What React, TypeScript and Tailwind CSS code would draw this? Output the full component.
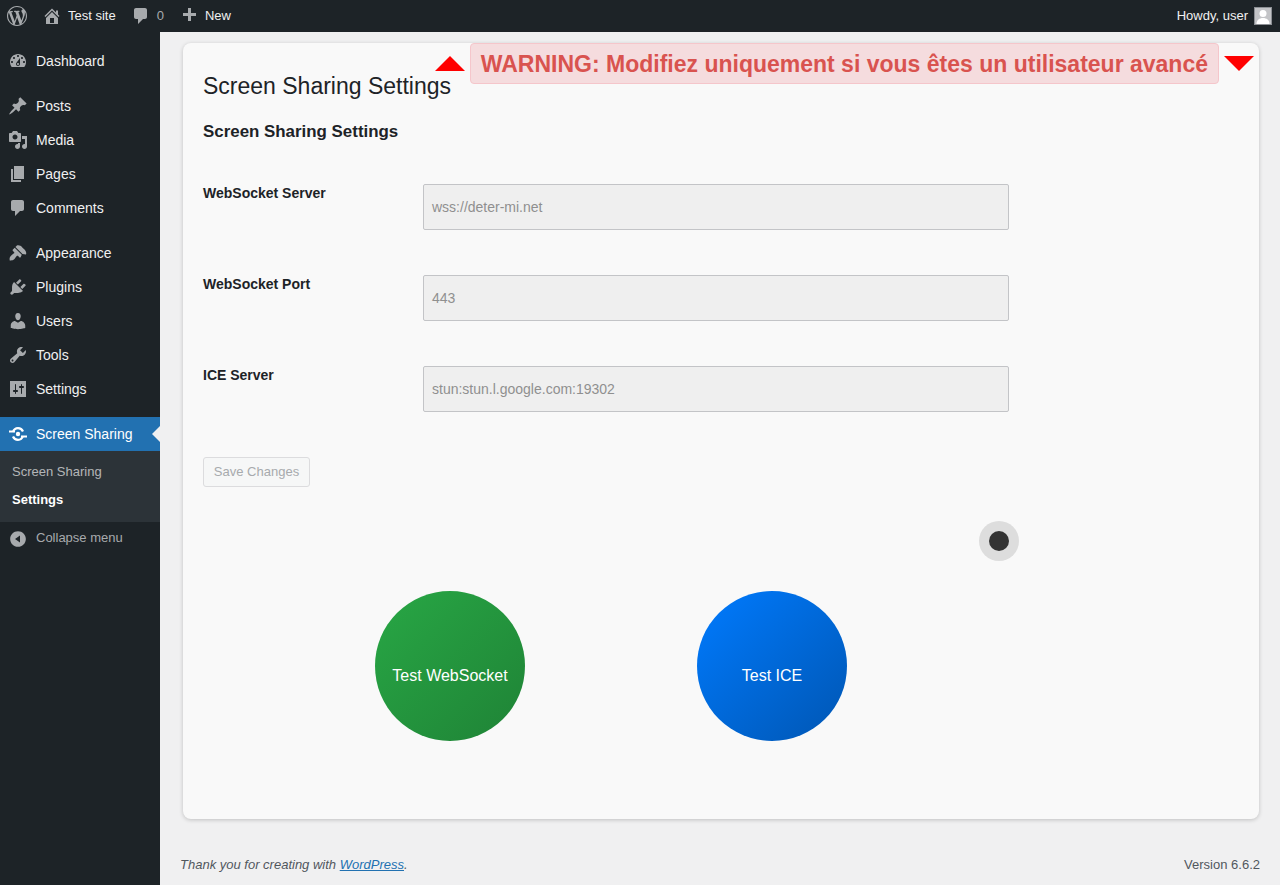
import React from 'react';

const icons: Record<string, string> = {
  dashboard: 'M3.76 16h12.48c1.1-1.37 1.76-3.11 1.76-5 0-4.42-3.58-8-8-8s-8 3.58-8 8c0 1.89.66 3.63 1.76 5zM10 4c.55 0 1 .45 1 1s-.45 1-1 1-1-.45-1-1 .45-1 1-1zM6 6c.55 0 1 .45 1 1s-.45 1-1 1-1-.45-1-1 .45-1 1-1zm8 0c.55 0 1 .45 1 1s-.45 1-1 1-1-.45-1-1 .45-1 1-1zm-5.37 5.55L12 7v6c0 1.1-.9 2-2 2s-2-.9-2-2c0-.57.24-1.08.63-1.45zM4 10c.55 0 1 .45 1 1s-.45 1-1 1-1-.45-1-1 .45-1 1-1zm12 0c.55 0 1 .45 1 1s-.45 1-1 1-1-.45-1-1 .45-1 1-1zm-5 3c0-.55-.45-1-1-1s-1 .45-1 1 .45 1 1 1 1-.45 1-1z',
  posts: 'M10.44 3.02l1.82-1.82 6.36 6.35-1.83 1.82c-1.05-.68-2.48-.57-3.41.36l-.75.75c-.92.93-1.04 2.35-.35 3.41l-1.83 1.82-2.41-2.41-2.8 2.79c-.42.42-3.38 2.71-3.8 2.29s1.86-3.39 2.28-3.81l2.79-2.79L4.1 9.36l1.83-1.82c1.05.69 2.48.57 3.4-.36l.75-.75c.93-.92 1.05-2.35.36-3.41z',
  media: 'M13 11V4c0-.55-.45-1-1-1h-1.67L9 1H5L3.67 3H2c-.55 0-1 .45-1 1v7c0 .55.45 1 1 1h10c.55 0 1-.45 1-1zM7 4.5c1.38 0 2.5 1.12 2.5 2.5S8.38 9.5 7 9.5 4.5 8.38 4.5 7 5.62 4.5 7 4.5zM14 6h5v10.5c0 1.38-1.12 2.5-2.5 2.5S14 17.88 14 16.5s1.12-2.5 2.5-2.5c.17 0 .34.02.5.05V9h-3V6zm-4 8.05V13h2v3.5c0 1.38-1.12 2.5-2.5 2.5S7 17.88 7 16.5 8.12 14 9.5 14c.17 0 .34.02.5.05z',
  pages: 'M6 15V2h10v13H6zm-1 1h8v2H3V5h2v11z',
  comments: 'M5 2h9c1.1 0 2 .9 2 2v7c0 1.1-.9 2-2 2h-2l-5 5v-5H5c-1.1 0-2-.9-2-2V4c0-1.1.9-2 2-2z',
  appearance: 'M14.48 11.06L7.41 3.99l1.5-1.5c.5-.56 2.3-.47 3.51.32 1.21.8 1.43 1.28 2.66 2.51 1.23 1.24 1.76 1.47 2.52 2.65.77 1.19.81 2.99.32 3.51zm-.71.71L6.7 4.7 4.93 6.47c-.39.39-.39 1.02 0 1.41l1.06 1.06c.39.39.39 1.03 0 1.42-.6.6-1.43 1.11-2.21 1.69-.35.26-.7.53-1.01.84-1.3 1.3-1.3 3.2-1.05 4.5 1.3.2 3.3.2 4.5-1.05.31-.31.58-.66.84-1.01.58-.78 1.09-1.61 1.69-2.21.39-.39 1.03-.39 1.42 0l1.06 1.06c.39.39 1.02.39 1.41 0z',
  plugins: 'M13.11 4.36L9.87 7.6 8 5.73l3.24-3.24c.35-.34 1.05-.2 1.56.32.52.51.66 1.21.31 1.55zm-8 1.77l.91-1.12 9.01 9.01-1.19.84c-.71.71-2.63 1.16-3.82 1.16H6.14L4.9 17.26c-.59.59-1.54.59-2.12 0-.59-.58-.59-1.53 0-2.12l1.24-1.24v-3.88c0-1.13.4-3.19 1.09-3.89zm7.26 3.97l3.24-3.24c.34-.35 1.04-.21 1.55.31.52.51.66 1.21.31 1.55l-3.24 3.25z',
  users: 'M10 9.25c-2.27 0-2.73-3.44-2.73-3.44C7 4.02 7.82 2 9.97 2c2.16 0 2.98 2.02 2.71 3.81 0 0-.41 3.44-2.68 3.44zm0 2.57L12.72 10c2.39 0 4.52 2.33 4.52 4.53v2.49s-3.65 1.13-7.24 1.13c-3.65 0-7.24-1.13-7.24-1.13v-2.49c0-2.25 1.94-4.48 4.15-4.48z',
  tools: 'M16.68 9.77c-1.34 1.34-3.3 1.67-4.95.99l-5.41 6.52c-.99.99-2.59.99-3.58 0s-.99-2.59 0-3.57l6.52-5.42c-.68-1.65-.35-3.61.99-4.95 1.28-1.28 3.12-1.62 4.72-1.06l-2.89 2.89 2.82 2.82 2.86-2.87c.53 1.58.18 3.39-1.08 4.65zM3.81 16.21c.4.39 1.03.39 1.43 0 .4-.4.4-1.03 0-1.43-.39-.39-1.03-.39-1.43 0-.39.4-.39 1.03 0 1.43z',
  settings: 'M2 2h16v16H2zM8 11h1c.55 0 1 .45 1 1s-.45 1-1 1H8v1.5c0 .28-.22.5-.5.5s-.5-.22-.5-.5V13H6c-.55 0-1-.45-1-1s.45-1 1-1h1V5.5c0-.28.22-.5.5-.5s.5.22.5.5V11zm5-2h-1c-.55 0-1-.45-1-1s.45-1 1-1h1V5.5c0-.28.22-.5.5-.5s.5.22.5.5V7h1c.55 0 1 .45 1 1s-.45 1-1 1h-1v5.5c0 .28-.22.5-.5.5s-.5-.22-.5-.5V9z',
  collapse: 'M10 2.16c4.33 0 7.84 3.51 7.84 7.84s-3.51 7.84-7.84 7.84S2.16 14.33 2.16 10 5.67 2.16 10 2.16zM12 13.5v-7L7 10z',
  home: 'M16 8.5l1.53 1.53-1.06 1.06L10 4.62l-6.47 6.47-1.06-1.06L10 2.5l4 4v-2h2v4zm-6-2.46l6 5.99V18H4v-5.97zM12 17v-5H8v5h4z',
  plus: 'M17 7v3h-5v5H9v-5H4V7h5V2h3v5h5z',
  wp: 'M20 10c0-5.51-4.49-10-10-10C4.48 0 0 4.49 0 10c0 5.52 4.48 10 10 10 5.51 0 10-4.48 10-10zM7.78 15.37L4.37 6.22c.55-.02 1.17-.08 1.17-.08.5-.06.44-1.13-.06-1.11 0 0-1.45.11-2.37.11-.18 0-.37 0-.58-.01C4.12 2.69 6.89 1.05 10 1.05c2.32 0 4.43.87 6.03 2.34-.68-.11-1.65.39-1.65 1.58 0 .74.45 1.36.9 2.1.35.61.55 1.36.55 2.46 0 1.49-1.4 5-1.4 5l-3.03-8.37c.54-.02.82-.17.82-.17.5-.05.44-1.25-.06-1.22 0 0-1.44.12-2.38.12-.87 0-2.33-.12-2.33-.12-.5-.03-.56 1.2-.06 1.22l.92.08 1.26 3.41zM17.41 10c.24-.64.74-1.87.43-4.25.7 1.29 1.05 2.71 1.05 4.25 0 3.29-1.73 6.24-4.4 7.78.97-2.59 1.94-5.2 2.92-7.78zM6.1 18.09C3.12 16.65 1.11 13.53 1.11 10c0-1.3.23-2.48.72-3.59C3.25 10.3 4.67 14.2 6.1 18.09zm4.03-6.63l2.58 6.98c-.86.29-1.76.45-2.71.45-.79 0-1.57-.11-2.29-.33.81-2.38 1.63-4.74 2.42-7.1z',
};

function Dash({ name, className }: { name: string; className: string }) {
  return (
    <svg viewBox="0 0 20 20" className={className} fill="currentColor">
      <path d={icons[name]} fillRule="evenodd" clipRule="evenodd" />
    </svg>
  );
}

function ShareIcon() {
  return (
    <svg viewBox="0 0 20 20" className="block h-5 w-5 text-white" fill="none" stroke="currentColor">
      <circle cx="10" cy="10" r="2.200" fill="currentColor" stroke="none" />
      <path d="M5 8C6 5.200 8 4.200 10 4.200S14 5.200 15 7.500M15 12C14 14.800 12 15.800 10 15.800S6 14.800 5 12.500" strokeWidth="2.200" />
      <path d="M1 7.500h6M13 12.500h6" strokeWidth="2.200" />
    </svg>
  );
}

const menuGroups = [
  [['dashboard', 'Dashboard']],
  [['posts', 'Posts'], ['media', 'Media'], ['pages', 'Pages'], ['comments', 'Comments']],
  [['appearance', 'Appearance'], ['plugins', 'Plugins'], ['users', 'Users'], ['tools', 'Tools'], ['settings', 'Settings']],
];

const fields = [
  ['WebSocket Server', 'wss://deter-mi.net'],
  ['WebSocket Port', '443'],
  ['ICE Server', 'stun:stun.l.google.com:19302'],
];

function Sidebar() {
  return (
    <aside className="w-40 shrink-0 bg-[#1d2327] pt-3 text-sm text-[#f0f0f1]">
      {menuGroups.map((group, i) => (
        <div key={i} className="mb-[11px]">
          {group.map(([icon, label]) => (
            <div key={label} className="flex h-[34px] items-center">
              <Dash name={icon} className="ml-2 mr-[8px] h-5 w-5 text-[#a7aaad]" />
              <span>{label}</span>
            </div>
          ))}
        </div>
      ))}
      <div className="relative flex h-[34px] items-center bg-[#2271b1] text-white">
        <span className="ml-2 mr-[8px]"><ShareIcon /></span>
        <span>Screen Sharing</span>
        <span className="absolute right-0 top-[9px] border-y-8 border-r-8 border-y-transparent border-r-[#f0f0f1]" />
      </div>
      <div className="bg-[#2c3338] pb-[8px] pt-[7px] text-[13px]">
        <div className="flex h-7 items-center pl-3 text-[#f0f0f1]/70">Screen Sharing</div>
        <div className="flex h-7 items-center pl-3 font-bold text-white">Settings</div>
      </div>
      <div className="mt-[5px] flex h-[24px] items-center text-[13px] text-[#a7aaad]">
        <Dash name="collapse" className="ml-2 mr-[8px] h-5 w-5 text-[#a7aaad]" />
        <span className="-mt-[2px]">Collapse menu</span>
      </div>
    </aside>
  );
}

function TopBar() {
  return (
    <header className="flex h-8 items-center justify-between bg-[#1d2327] text-[13px] text-[#f0f0f1]">
      <div className="flex items-center">
        <Dash name="wp" className="ml-[7px] h-5 w-5 text-[#a7aaad]" />
        <Dash name="home" className="ml-[15px] h-5 w-5 text-[#a7aaad]" />
        <span className="ml-[6px]">Test site</span>
        <Dash name="comments" className="ml-[15px] h-5 w-5 text-[#a7aaad]" />
        <span className="ml-[6px] text-[#a7aaad]">0</span>
        <Dash name="plus" className="ml-[15px] h-5 w-5 text-[#a7aaad]" />
        <span className="ml-[6px]">New</span>
      </div>
      <div className="flex items-center pr-2">
        <span>Howdy, user</span>
        <span className="ml-[6px] flex h-[18px] w-[18px] items-end justify-center overflow-hidden border border-[#8c8f94] bg-[#c3c4c7]">
          <svg viewBox="0 0 16 16" className="h-4 w-4 text-white" fill="currentColor">
            <circle cx="8" cy="5.500" r="3.500" />
            <path d="M1.500 16c0-4 3-6 6.500-6s6.500 2 6.500 6z" />
          </svg>
        </span>
      </div>
    </header>
  );
}

function Warning() {
  return (
    <div className="absolute right-[5px] top-0 flex items-start">
      <span className="mr-[5px] mt-[13px] h-0 w-0 border-x-[15px] border-b-[15px] border-x-transparent border-b-[#ff0000]" />
      <div className="flex h-[41px] items-center whitespace-nowrap rounded-[4px] border border-[#f5c6cb] bg-[#f5dcde] px-[10px] pt-[1px] text-[23px] font-bold text-[#d9534f]">
        WARNING: Modifiez uniquement si vous êtes un utilisateur avancé
      </div>
      <span className="ml-[5px] mt-[13px] h-0 w-0 border-x-[15px] border-t-[15px] border-x-transparent border-t-[#ff0000]" />
    </div>
  );
}

export default function App() {
  return (
    <div className="flex min-h-[885px] flex-col font-['Liberation_Sans',sans-serif] text-[#1d2327]">
      <TopBar />
      <div className="flex flex-1">
        <Sidebar />
        <main className="flex flex-1 flex-col bg-[#f0f0f1]">
          <section className="relative ml-[23px] mr-[21px] mt-[11px] h-[776px] rounded-lg bg-[#f9f9f9] px-5 pt-[29px] shadow-[0_1px_4px_rgba(0,0,0,0.2)]">
            <Warning />
            <h1 className="text-[23px] leading-[29px]">Screen Sharing Settings</h1>
            <h2 className="mt-[19px] text-[16.900px] font-bold leading-[24px]">Screen Sharing Settings</h2>
            <div className="mt-[30px] w-[816px] pt-[10px]">
              {fields.map(([label, value]) => (
                <div key={label} className="mb-[45px] flex items-start">
                  <label className="w-[220px] text-sm font-bold leading-[18px]">{label}</label>
                  <div className="flex h-[46px] w-[586px] items-center rounded-[2px] border border-[#c3c4c7] bg-[#efefef] px-2 text-sm text-[#8f8f8f]">
                    {value}
                  </div>
                </div>
              ))}
              <div className="flex h-[30px] w-[107px] items-center justify-center rounded-[3px] border border-[#dcdcde] bg-[#f6f7f7] text-[13px] text-[#a7aaad]">
                Save Changes
              </div>
              <div className="mt-[34px] flex justify-end">
                <div className="flex h-10 w-10 items-center justify-center rounded-full bg-[#dddddd]">
                  <div className="h-5 w-5 rounded-full bg-[#333333]" />
                </div>
              </div>
              <div className="mt-[30px] flex justify-evenly">
                <div className="flex h-[150px] w-[150px] items-center justify-center rounded-full bg-gradient-to-br from-[#28a745] to-[#1f8336] pt-5 text-base text-white">
                  Test WebSocket
                </div>
                <div className="flex h-[150px] w-[150px] items-center justify-center rounded-full bg-gradient-to-br from-[#007bff] to-[#0056b3] pt-5 text-base text-white">
                  Test ICE
                </div>
              </div>
            </div>
          </section>
          <footer className="ml-5 mr-5 mt-[36px] flex justify-between text-[13px] text-[#50575e]">
            <span className="italic">
              Thank you for creating with <a className="text-[#2271b1] underline">WordPress</a>.
            </span>
            <span>Version 6.6.2</span>
          </footer>
        </main>
      </div>
    </div>
  );
}
